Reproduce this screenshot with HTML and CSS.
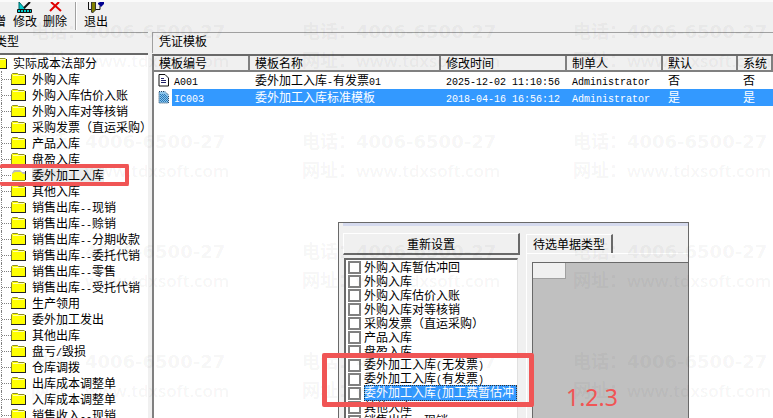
FILE: index.html
```
<!DOCTYPE html>
<html lang="zh-CN">
<head>
<meta charset="utf-8">
<title>凭证模板</title>
<link rel="stylesheet" href="styles.css">
</head>
<body>

<svg class="defs" width="0" height="0">
	<symbol id="folder" viewBox="0 0 16 14">
		<path d="M1 12V3l1-2h4l2 2h6v9z" fill="#ff0"/>
		<path d="M.5 12V2.500l1-1h5l1 1h6" fill="none" stroke="#8c8c2a"/>
		<path d="M2 3.500h11" stroke="#ffffb0"/>
		<path d="M0 12.500h15M14.500 3v10" fill="none" stroke="#222"/>
	</symbol>
	<symbol id="folder-open" viewBox="0 0 16 14">
		<path d="M1 5l2-3h6l2 2h3v4H1z" fill="#bbb"/>
		<path d="M1 12V6l3-2h6l2 2h2v6z" fill="#ff0"/>
		<path d="M14.500 3v9" stroke="#222"/>
		<path d="M1 12.500h13" stroke="#8c8c2a"/>
	</symbol>
</svg>

<div class="toolbar">
	<button type="button" class="cut">
		<svg width="16" height="12" viewBox="0 0 16 12"></svg>
		<span>新增</span>
	</button>
	<button type="button">
		<svg width="16" height="12" viewBox="0 0 16 12">
			<path d="M2 0v8h7z" fill="#0cc" stroke="#066"/>
			<path d="M7 6l6-6" stroke="#111" stroke-width="2"/>
			<path d="M.5 7.500h14v3h-14z" fill="#0cc" stroke="#111"/>
			<path d="M3.500 8v2M6.500 8v2M9.500 8v2M12.500 8v2" stroke="#111"/>
		</svg>
		<span>修改</span>
	</button>
	<button type="button">
		<svg width="16" height="12" viewBox="0 0 16 12">
			<path d="M4 0l10 9M12 0L3 9" stroke="#e00000" stroke-width="2"/>
		</svg>
		<span>删除</span>
	</button>
	<i class="sep"></i>
	<button type="button">
		<svg width="16" height="12" viewBox="0 0 16 12">
			<path d="M.5 0v7.500h3M8 7.500h4V4" fill="none" stroke="#111"/>
			<path d="M3.500 0h4v8l-3 3-1-1z" fill="#808000" stroke="#333"/>
			<path d="M10 1l2-1h4v2l-3 3-3-3z" fill="#000090"/>
		</svg>
		<span>退出</span>
	</button>
</div>

<div class="main">
	<div class="side">
		<div class="caption caption-cut">类型</div>
		<ul class="tree">
			<li class="root"><svg><use href="#folder"/></svg><span>实际成本法部分</span></li>
			<li><svg><use href="#folder"/></svg><span>外购入库</span></li>
			<li><svg><use href="#folder"/></svg><span>外购入库估价入账</span></li>
			<li><svg><use href="#folder"/></svg><span>外购入库对等核销</span></li>
			<li><svg><use href="#folder"/></svg><span>采购发票（直运采购）</span></li>
			<li><svg><use href="#folder"/></svg><span>产品入库</span></li>
			<li><svg><use href="#folder"/></svg><span>盘盈入库</span></li>
			<li class="current"><svg><use href="#folder-open"/></svg><span>委外加工入库</span></li>
			<li><svg><use href="#folder"/></svg><span>其他入库</span></li>
			<li><svg><use href="#folder"/></svg><span>销售出库<b>--</b>现销</span></li>
			<li><svg><use href="#folder"/></svg><span>销售出库<b>--</b>赊销</span></li>
			<li><svg><use href="#folder"/></svg><span>销售出库<b>--</b>分期收款</span></li>
			<li><svg><use href="#folder"/></svg><span>销售出库<b>--</b>委托代销</span></li>
			<li><svg><use href="#folder"/></svg><span>销售出库<b>--</b>零售</span></li>
			<li><svg><use href="#folder"/></svg><span>销售出库<b>--</b>受托代销</span></li>
			<li><svg><use href="#folder"/></svg><span>生产领用</span></li>
			<li><svg><use href="#folder"/></svg><span>委外加工发出</span></li>
			<li><svg><use href="#folder"/></svg><span>其他出库</span></li>
			<li><svg><use href="#folder"/></svg><span>盘亏<b>/</b>毁损</span></li>
			<li><svg><use href="#folder"/></svg><span>仓库调拨</span></li>
			<li><svg><use href="#folder"/></svg><span>出库成本调整单</span></li>
			<li><svg><use href="#folder"/></svg><span>入库成本调整单</span></li>
			<li><svg><use href="#folder"/></svg><span>销售收入<b>--</b>现销</span></li>
		</ul>
	</div>

	<div class="content">
		<div class="caption">凭证模板</div>
		<div class="list">
			<table>
				<colgroup>
					<col class="c-code"><col class="c-name"><col class="c-time"><col class="c-user"><col class="c-def"><col>
				</colgroup>
				<thead>
					<tr><th>模板编号</th><th>模板名称</th><th>修改时间</th><th>制单人</th><th>默认</th><th>系统</th></tr>
				</thead>
				<tbody>
					<tr>
						<td class="code">
							<svg width="12" height="13" viewBox="0 0 12 13">
								<path d="M1 .5h6l3.500 3.500v8h-9.500z" fill="#fff" stroke="#111"/>
								<path d="M3 4.500h3M3 6.500h5M3 8.500h5" stroke="#226"/>
							</svg><b>A001</b>
						</td>
						<td>委外加工入库<b>-</b>有发票<b>01</b></td>
						<td><b>2025-12-02 11:10:56</b></td>
						<td><b>Administrator</b></td>
						<td>否</td>
						<td>否</td>
					</tr>
					<tr class="selected">
						<td class="code">
							<svg width="12" height="13" viewBox="0 0 12 13">
								<path d="M1 .5h6l3.500 3.500v8h-9.500z" fill="#8cc4ea" stroke="#246" stroke-dasharray="1 1"/>
								<path d="M2 3.500h5M2 5.500h8M2 7.500h8M2 9.500h8" stroke="#2878b8" stroke-dasharray="1 1"/>
								<path d="M3 4.500h5M3 6.500h7M3 8.500h7M3 10.500h7" stroke="#2878b8" stroke-dasharray="1 1"/>
							</svg><b>IC003</b>
						</td>
						<td>委外加工入库标准模板</td>
						<td><b>2018-04-16 16:56:12</b></td>
						<td><b>Administrator</b></td>
						<td>是</td>
						<td>是</td>
					</tr>
				</tbody>
			</table>
		</div>
	</div>
</div>

<div class="dialog">
	<div class="picker">
		<button type="button">重新设置</button>
		<div class="checks">
			<label><input type="checkbox"><span>外购入库暂估冲回</span></label>
			<label><input type="checkbox"><span>外购入库</span></label>
			<label><input type="checkbox"><span>外购入库估价入账</span></label>
			<label><input type="checkbox"><span>外购入库对等核销</span></label>
			<label><input type="checkbox"><span>采购发票（直运采购）</span></label>
			<label><input type="checkbox"><span>产品入库</span></label>
			<label><input type="checkbox"><span>盘盈入库</span></label>
			<label><input type="checkbox"><span>委外加工入库<b>(</b>无发票<b>)</b></span></label>
			<label><input type="checkbox"><span>委外加工入库<b>(</b>有发票<b>)</b></span></label>
			<label class="active"><input type="checkbox"><span>委外加工入库<b>(</b>加工费暂估冲</span></label>
			<label><input type="checkbox"><span>其他入库</span></label>
			<label><input type="checkbox"><span>销售出库<b>--</b>现销</span></label>
		</div>
	</div>
	<div class="tabs">
		<div class="tab-row"><button type="button">待选单据类型</button></div>
		<div class="sheet"><div class="corner"></div></div>
	</div>
</div>

<div class="watermark">
	<p>电话：<strong>4006-6500-27</strong><br>网址：<em>www.tdxsoft.com</em></p>
	<p>电话：<strong>4006-6500-27</strong><br>网址：<em>www.tdxsoft.com</em></p>
	<p>电话：<strong>4006-6500-27</strong><br>网址：<em>www.tdxsoft.com</em></p>
	<p>电话：<strong>4006-6500-27</strong><br>网址：<em>www.tdxsoft.com</em></p>
	<p>电话：<strong>4006-6500-27</strong><br>网址：<em>www.tdxsoft.com</em></p>
	<p>电话：<strong>4006-6500-27</strong><br>网址：<em>www.tdxsoft.com</em></p>
	<p>电话：<strong>4006-6500-27</strong><br>网址：<em>www.tdxsoft.com</em></p>
	<p>电话：<strong>4006-6500-27</strong><br>网址：<em>www.tdxsoft.com</em></p>
	<p>电话：<strong>4006-6500-27</strong><br>网址：<em>www.tdxsoft.com</em></p>
	<p>电话：<strong>4006-6500-27</strong><br>网址：<em>www.tdxsoft.com</em></p>
	<p>电话：<strong>4006-6500-27</strong><br>网址：<em>www.tdxsoft.com</em></p>
	<p>电话：<strong>4006-6500-27</strong><br>网址：<em>www.tdxsoft.com</em></p>
</div>

<div class="mark mark-tree"></div>
<div class="mark mark-checks"></div>
<div class="mark-text">1.2.3</div>

</body>
</html>
```

FILE: styles.css
```
* {
    box-sizing: border-box;
}
body {
    margin: 0;
    height: 100vh;
    overflow: hidden;
    position: relative;
    display: flex;
    flex-direction: column;
    background: #f0f0f0;
    color: #000;
    font: 12px/16px "Noto Sans CJK SC", sans-serif;
}
button {
    font: inherit;
    color: inherit;
    margin: 0;
    padding: 0;
    border: 0;
    background: none;
}
/* half-width characters, 6px each */
b {
    font: 10px/12px "Liberation Mono", monospace;
}
.defs {
    position: absolute;
}

/* toolbar */
.toolbar {
    display: flex;
    height: 32px;
    flex: none;
    border-top: 2px solid #fafafa;
}
.toolbar button {
    display: flex;
    flex-direction: column;
    align-items: center;
    width: 30px;
    line-height: 14px;
}
.toolbar span {
    white-space: nowrap;
}
.toolbar .cut {
    width: 10px;
    padding-right: 4px;
    align-items: flex-end;
}
.sep {
    width: 2px;
    height: 28px;
    margin: 0 7px 0 5px;
    border-left: 1px solid #a0a0a0;
    border-right: 1px solid #fff;
}
.toolbar .sep + button {
    width: 24px;
}

/* panels */
.main {
    display: flex;
    flex: 1;
    min-height: 0;
}
.side {
    display: flex;
    flex-direction: column;
    width: 148px;
    flex: none;
}
.caption {
    height: 21px;
    flex: none;
    padding: 0 6px;
    border-top: 1px solid #a0a0a0;
    border-left: 1px solid #a0a0a0;
}
.caption-cut {
    padding: 0;
    border-left: 0;
    text-indent: -5px;
}
.tree {
    flex: 1;
    margin: 0;
    padding: 0 0 0 1px;
    list-style: none;
    background: #fff;
    border-top: 2px solid #696969;
    overflow: hidden;
}
.tree li {
    display: flex;
    align-items: center;
    height: 16px;
    border-left: 1px dotted #808080;
    white-space: nowrap;
}
.tree li::before {
    content: "";
    width: 9px;
    flex: none;
    border-top: 1px dotted #808080;
}
.tree svg {
    width: 16px;
    height: 14px;
    flex: none;
    margin-right: 5px;
}
.tree .root {
    border: 0;
    margin-left: -9px;
}
.tree .root::before {
    width: 0;
}
.tree .current span {
    background: #ececec;
}

.content {
    display: flex;
    flex-direction: column;
    flex: 1;
    min-width: 0;
    margin-left: 4px;
}
.list {
    flex: 1;
    background: #fff;
    border-top: 2px solid #696969;
    border-left: 2px solid #808080;
    margin-top: 1px;
    overflow: hidden;
}
table {
    width: 100%;
    table-layout: fixed;
    border-collapse: separate;
    border-spacing: 0;
}
.c-code {
    width: 96px;
}
.c-name {
    width: 191px;
}
.c-time {
    width: 126px;
}
.c-user {
    width: 96px;
}
.c-def {
    width: 75px;
}
th, td {
    padding: 0 0 0 5px;
    text-align: left;
    font-weight: normal;
    white-space: nowrap;
    overflow: hidden;
}
th {
    height: 16px;
    background: #f0f0f0;
    border-right: 2px solid #808080;
    border-bottom: 2px solid #808080;
    line-height: 14px;
}
td {
    height: 17px;
    line-height: 16px;
    vertical-align: top;
}
.code {
    padding-left: 4px;
}
.code svg {
    vertical-align: top;
    margin: 2px 4px 0 0;
}
.selected td {
    background: #3399ff;
    color: #fff;
}
.selected .code {
    background: linear-gradient(to right, #fff 18px, #3399ff 18px);
}

/* template dialog, lies over the list */
.dialog {
    position: absolute;
    top: 222px;
    bottom: 0;
    left: 338px;
    width: 351px;
    display: flex;
    background: #f0f0f0;
    border: 1px solid #696969;
    border-bottom: 0;
    overflow: hidden;
}
.dialog::before {
    content: "";
    position: absolute;
    top: 0;
    left: 4px;
    right: 0;
    height: 3px;
    background: #d5daee;
}
.picker {
    display: flex;
    flex-direction: column;
    width: 177px;
    margin: 10px 0 0 4px;
}
.picker button {
    height: 22px;
    flex: none;
    border: 1px solid #fff;
    border-right: 2px solid #696969;
    border-bottom: 2px solid #696969;
}
.checks {
    flex: 1;
    min-height: 0;
    margin: 3px 2px 0 1px;
    padding-left: 2px;
    background: #fff;
    border-top: 2px solid #696969;
    border-left: 2px solid #696969;
    border-right: 1px solid #e0e0e0;
    overflow: hidden;
}
.checks label {
    display: flex;
    align-items: center;
    height: 14px;
    line-height: 14px;
    white-space: nowrap;
}
.checks input {
    appearance: none;
    width: 13px;
    height: 13px;
    flex: none;
    margin: 0 3px 0 0;
    border: 2px solid #808080;
    background: #fff;
}
.checks .active span {
    flex: 1;
    min-width: 0;
    overflow: hidden;
    background: #3399ff;
    color: #fff;
    outline: 1px dotted #333;
    outline-offset: -1px;
}
.tabs {
    display: flex;
    flex-direction: column;
    flex: 1;
    margin: 11px 0 0 6px;
    border-left: 1px solid #fff;
}
.tab-row {
    height: 20px;
    display: flex;
    border-bottom: 1px solid #fff;
}
.tab-row button {
    width: 86px;
    border-top: 1px solid #fff;
    border-right: 2px solid #696969;
}
.sheet {
    flex: 1;
    margin: 8px 0 0 5px;
    background: #c0c0c0;
    border-top: 1px solid #696969;
    border-left: 1px solid #696969;
}
.corner {
    width: 33px;
    height: 16px;
    background: #f0f0f0;
    border-right: 1px solid #a0a0a0;
    border-bottom: 1px solid #a0a0a0;
}

/* watermark over the whole window */
.watermark {
    position: absolute;
    inset: 0;
    overflow: hidden;
    padding: 16px 0 0 31px;
    display: grid;
    grid-template-columns: repeat(3, 271px);
    grid-auto-rows: 110px;
    color: rgba(0, 0, 0, 0.05);
    font-size: 18px;
    font-weight: bold;
    line-height: 29px;
    pointer-events: none;
}
.watermark p {
    margin: 0;
    white-space: nowrap;
}
.watermark strong {
    font: bold 18px/20px "DejaVu Sans", sans-serif;
}
.watermark em {
    font: 600 17px/20px "Open Sans", sans-serif;
}

/* red notes */
.mark {
    position: absolute;
    border: 5px solid #f05555;
    border-radius: 2px;
}
.mark-tree {
    top: 164px;
    left: 0;
    width: 129px;
    height: 22px;
    border-width: 4px;
    border-left: 0;
}
.mark-checks {
    top: 353px;
    left: 322px;
    width: 212px;
    height: 54px;
}
.mark-text {
    position: absolute;
    top: 384px;
    left: 566px;
    color: #f05555;
    font: 23px/26px "Noto Sans", sans-serif;
}
```
